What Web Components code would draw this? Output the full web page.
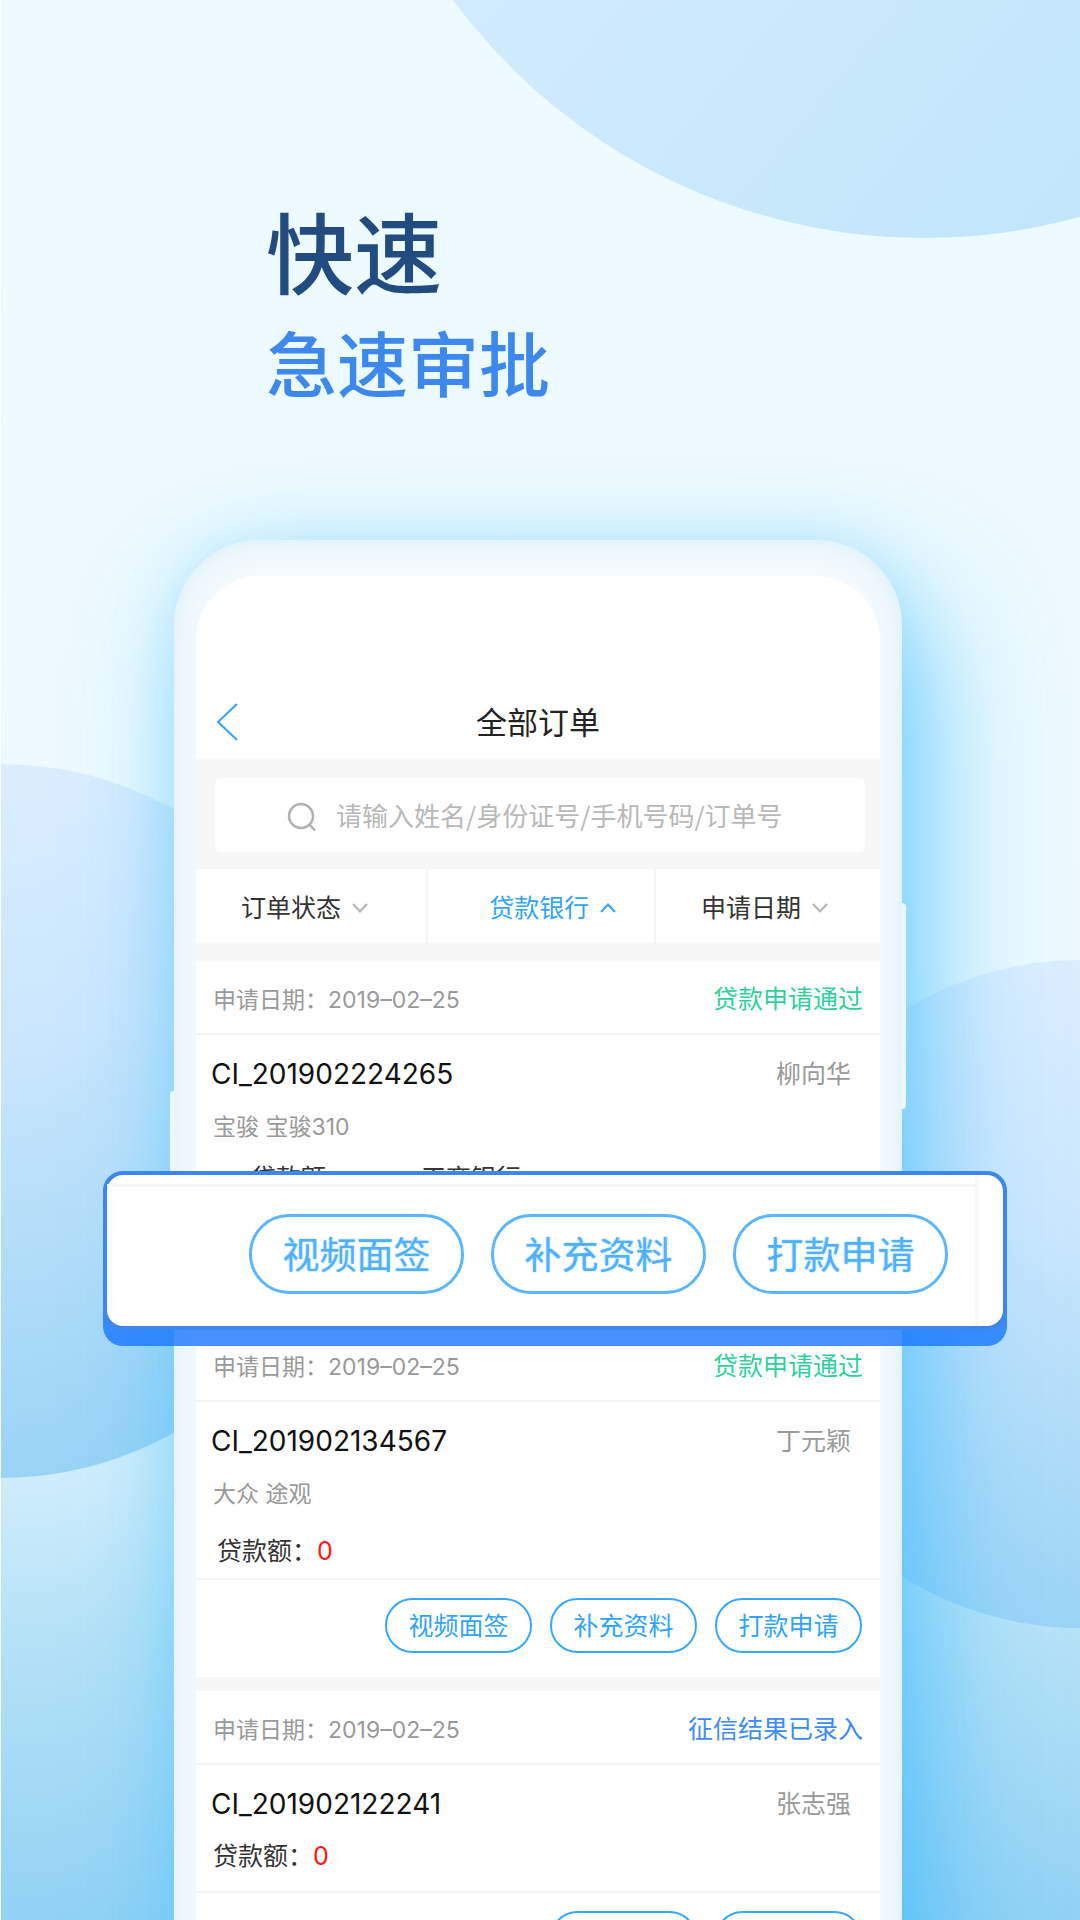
<!DOCTYPE html>
<html lang="zh-CN">
<head>
<meta charset="utf-8">
<title>全部订单</title>
<style>
body { margin: 0; font-family: Inter, "Noto Sans CJK SC", sans-serif; }
</style>
</head>
<body>
<promo-page>
  <h1 slot="title">快速</h1>
  <h2 slot="subtitle">急速审批</h2>
  <phone-frame>
    <app-bar>全部订单</app-bar>
    <search-bar></search-bar>
    <filter-tabs></filter-tabs>
    <order-list>
      <order-card date="2019–02–25" state="贷款申请通过" code="CI_201902224265" person="柳向华" car="宝骏 宝骏310" bank="工商银行" actions="视频面签,补充资料,打款申请"></order-card>
      <order-card date="2019–02–25" state="贷款申请通过" code="CI_201902134567" person="丁元颖" car="大众 途观" amount="0" actions="视频面签,补充资料,打款申请"></order-card>
      <order-card date="2019–02–25" state="征信结果已录入" tone="blue" code="CI_201902122241" person="张志强" amount="0" actions="补充资料,打款申请"></order-card>
    </order-list>
  </phone-frame>
  <action-callout slot="callout">
    <pill-button size="large">视频面签</pill-button>
    <pill-button size="large">补充资料</pill-button>
    <pill-button size="large">打款申请</pill-button>
  </action-callout>
</promo-page>
<script>
function define(name, markup) {
  customElements.define(name, class extends HTMLElement {
    constructor() {
      super();
      this.attachShadow({ mode: 'open' });
    }
    connectedCallback() {
      this.shadowRoot.innerHTML = typeof markup === 'function' ? markup(this) : markup;
    }
  });
}

define('promo-page', `
<style>
:host { display: block; position: relative; height: 100vh; overflow: hidden; background: linear-gradient(#edfaff 0%, #ecfaff 50%, #cfedfb 77%, #b6e2f7 85%, #92d2f4 100%); }
.art { position: absolute; inset: 0; width: 100%; height: 100%; }
.content { position: relative; display: flex; flex-direction: column; min-height: 100%; }
header { padding: 190px 0 0 266px; height: 540px; box-sizing: border-box; }
::slotted(h1) { margin: 0; font-size: 88px; line-height: 130px; font-weight: 500; color: #224c7f; }
::slotted(h2) { margin: 0; font-size: 71px; line-height: 90px; font-weight: 500; color: #3d88ed; }
::slotted(phone-frame) { flex: 1; }
.callout { position: absolute; left: 103px; right: 73px; top: 1171px; }
</style>
<svg class="art" viewBox="0 0 1080 1920" preserveAspectRatio="none" aria-hidden="true">
  <defs>
    <linearGradient id="a" x1="0.2" y1="0.5" x2="0.8" y2="1"><stop offset="0" stop-color="#d6ecff"/><stop offset="1" stop-color="#bde4f9"/></linearGradient>
    <linearGradient id="b" x1="0.4" y1="0" x2="0.6" y2="1"><stop offset="0" stop-color="#dceeff"/><stop offset=".4" stop-color="#cae6fd"/><stop offset="1" stop-color="#98d3f5"/></linearGradient>
  </defs>
  <circle cx="924" cy="-347" r="585" fill="url(#a)"/>
  <circle cx="0" cy="1121" r="357" fill="url(#b)"/>
  <circle cx="1080" cy="1294" r="334" fill="url(#b)"/>
  <path d="M0 0V1920" stroke="#fff" stroke-width="2"/>
</svg>
<div class="content">
  <header><slot name="title"></slot><slot name="subtitle"></slot></header>
  <slot></slot>
</div>
<div class="callout"><slot name="callout"></slot></div>`);

define('phone-frame', `
<style>
:host { display: block; position: relative; margin: 0 178px 0 174px; padding: 36px 22px 0; border-radius: 86px 86px 0 0; background: #f4fafe; box-shadow: 28px 60px 120px rgba(40,180,255,.58), 0 0 60px rgba(100,210,255,.3), inset 0 0 30px #d8edfa; }
.screen { background: #fff; border-radius: 64px 64px 0 0; overflow: hidden; }
.key { position: absolute; width: 4px; background: #ecf7fe; }
.power { right: -4px; top: 363px; height: 206px; border-radius: 0 4px 4px 0; }
.volume { left: -4px; top: 551px; height: 206px; border-radius: 4px 0 0 4px; }
</style>
<span class="key power"></span><span class="key volume"></span>
<div class="screen"><slot></slot></div>`);

define('app-bar', `
<style>
:host { display: grid; grid-template-columns: 60px 1fr 60px; align-items: center; padding-top: 110px; height: 73px; color: #222; }
button { border: 0; background: none; padding: 0 0 0 20px; display: flex; }
h3 { margin: 0; font-size: 31px; line-height: 44px; font-weight: 400; text-align: center; }
</style>
<button aria-label="返回"><svg width="22" height="40" viewBox="0 0 22 40" fill="none" stroke="#2fa4fa" stroke-width="2"><path d="M21 1 2 19 21 37"/></svg></button>
<h3><slot></slot></h3>`);

define('search-bar', `
<style>
:host { display: block; background: #f7f7f7; padding: 19px 15px 17px 19px; }
label { display: flex; align-items: center; height: 74px; background: #fff; border-radius: 6px; padding-left: 72px; }
input { flex: 1; min-width: 0; border: 0; outline: 0; background: none; padding: 0; margin-left: 19px; font: 26px/40px "Noto Sans CJK SC", sans-serif; color: #333; }
input::placeholder { color: #b8b8b8; opacity: 1; }
svg { margin-top: 4px; }
</style>
<label><svg width="30" height="30" viewBox="0 0 30 30" fill="none" stroke="#b0b0b0" stroke-width="2.500"><circle cx="14" cy="14" r="12"/><path d="M22 22 28 28.500"/></svg>
<input type="search" aria-label="搜索订单" placeholder="请输入姓名/身份证号/手机号码/订单号"></label>`);

define('filter-tabs', `
<style>
:host { display: grid; grid-template-columns: 61fr 60fr 59fr; height: 74px; background: #fff; }
button { display: flex; align-items: center; justify-content: center; gap: 11px; border: 0; border-right: 2px solid #f5f5f5; background: none; padding: 4px 13px 0 0; font: inherit; font-size: 25px; line-height: 36px; color: #333; }
button:last-child { border: 0; padding-right: 7px; }
button.on { color: #2fa4fa; padding: 4px 0 0 24px; }
svg { fill: none; stroke: #b5b5b5; stroke-width: 2; }
.on svg { stroke: #2fa4fa; }
</style>
<button>订单状态<svg width="16" height="10" viewBox="0 0 16 10"><path d="M1 1 8 8.500 15 1"/></svg></button>
<button class="on">贷款银行<svg width="16" height="10" viewBox="0 0 16 10"><path d="M1 9 8 1.500 15 9"/></svg></button>
<button>申请日期<svg width="16" height="10" viewBox="0 0 16 10"><path d="M1 1 8 8.500 15 1"/></svg></button>`);

define('order-list', `
<style>:host { display: flex; flex-direction: column; gap: 14px; padding-top: 18px; background: #f7f7f7; }</style>
<slot></slot>`);

define('order-card', el => {
  const get = n => el.getAttribute(n) || '';
  const car = get('car') ? `<p class="car">${get('car')}</p>` : '';
  const bank = get('bank') ? `<span class="bank">${get('bank')}</span>` : '';
  const kind = bank ? 'wide' : car ? 'inset' : 'plain';
  const loan = `<p class="loan ${kind}">贷款额：<b>${get('amount')}</b>${bank}</p>`;
  const buttons = get('actions').split(',').map(t => `<pill-button>${t}</pill-button>`).join('');
  return `
<style>
:host { display: block; background: #fff; color: #333; }
p { margin: 0; }
.row { display: flex; justify-content: space-between; align-items: center; }
.head { height: 72px; padding: 4px 17px 0; box-sizing: border-box; }
.date { font-size: 23px; line-height: 34px; color: #999; padding-top: 2px; }
.state { font-size: 25px; line-height: 36px; color: #2fd19a; }
.state.blue { color: #3d8bf5; }
.body { border: 2px solid #f4f4f4; border-width: 2px 0; padding: 18px 17px 9px; }
.code { font-size: 28px; line-height: 42px; color: #111; margin-left: -2px; }
.person { font-size: 25px; line-height: 42px; color: #999; margin-right: 12px; }
.car { font-size: 23px; line-height: 34px; color: #999; margin-top: 15px; }
.loan { font-size: 25px; line-height: 36px; }
.inset { margin-top: 22px; padding-left: 4px; }
.wide { margin-top: 16px; padding: 0 0 10px 38px; }
.plain { margin-top: 13px; padding-bottom: 8px; }
.bank { margin-left: 70px; }
b { font-weight: 400; color: #ff1414; }
.foot { display: flex; justify-content: flex-end; gap: 18px; padding: 18px 18px 24px; }
</style>
<div class="row head"><p class="date">申请日期：<time>${get('date')}</time></p><span class="state ${get('tone')}">${get('state')}</span></div>
<div class="body"><div class="row"><span class="code">${get('code')}</span><span class="person">${get('person')}</span></div>${car}${loan}</div>
<div class="foot">${buttons}</div>`;
});

define('pill-button', `
<style>
:host { display: block; }
button { display: block; width: 147px; height: 55px; padding: 0; border: 2px solid #38a8fb; border-radius: 28px; background: #fff; font: inherit; font-size: 25px; line-height: 36px; color: #2fa4fa; }
:host([size="large"]) button { width: 215px; height: 80px; padding-top: 3px; border: 3px solid #5cb6fd; border-radius: 40px; font-size: 37px; line-height: 54px; color: #4fb0fd; text-shadow: 0 0 2px #8fcdfe; }
</style>
<button><slot></slot></button>`);

define('action-callout', `
<style>
:host { display: block; border-radius: 20px; border: 4px solid #3c86ec; background: #fff; box-shadow: 0 16px 0 rgba(20,115,255,.78); }
.rule { height: 9px; margin-right: 24px; border-right: 4px solid #f8f8f8; border-bottom: 3px solid #f6f6f6; }
.sheet { display: flex; justify-content: flex-end; gap: 27px; margin-right: 24px; padding: 27px 27px 32px 0; border-right: 4px solid #f8f8f8; }
</style>
<div class="rule"></div><div class="sheet"><slot></slot></div>`);
</script>
</body>
</html>
